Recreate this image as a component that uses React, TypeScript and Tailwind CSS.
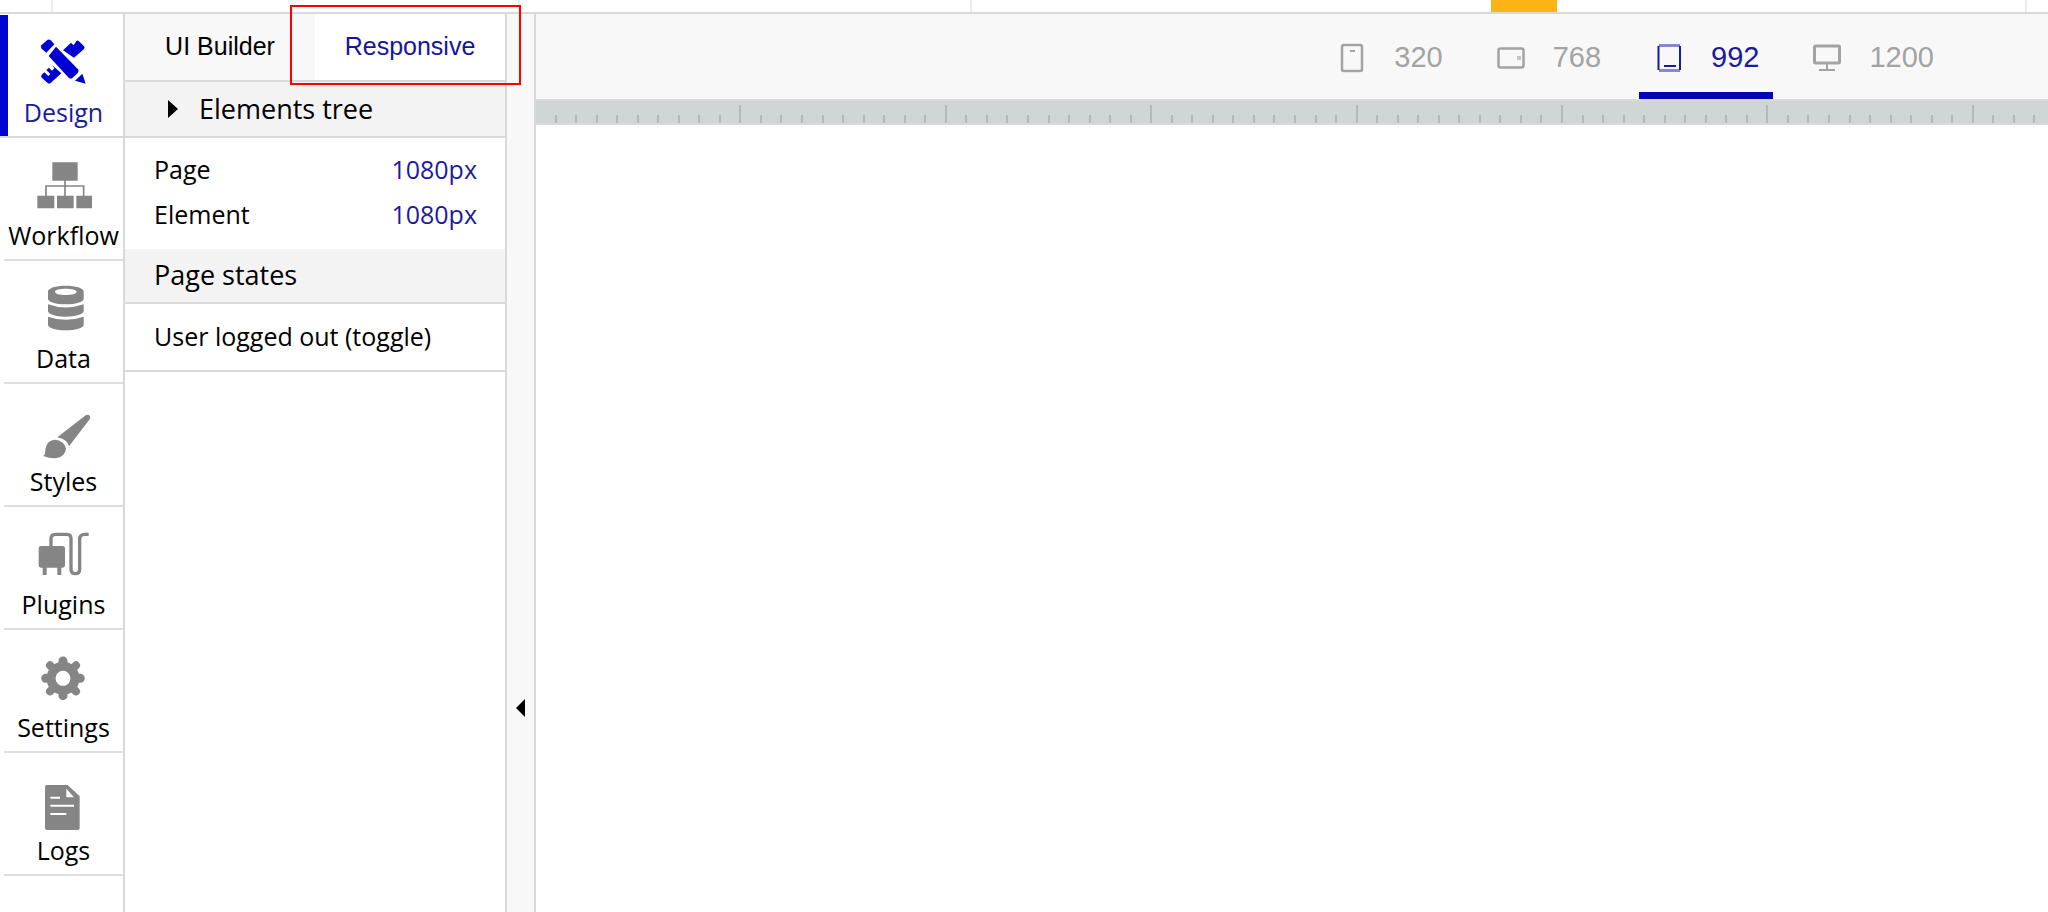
import type { ReactNode } from "react";

type NavItem = {
  label: string;
  icon: ReactNode;
  active?: boolean;
};

const DesignIcon = () => (
  <svg viewBox="108 108 168 168" className="size-14" fill="currentColor" aria-hidden="true">
    <path d="M124 136 L143 119 Q148 117 152 121 L163 133 L139 158 L125 146 Q121 141 124 136Z" />
    <path d="M168 140 L234 208 Q238 214 233 219 L218 233 Q212 238 206 233 L146 168Z" />
    <path d="M225 242 L247 221 L257 251Z" />
    <path d="M229 123 Q233 120 237 124 L252 139 Q256 143 252 147 L222 173 L189 151 L213 128 L221 136Z" />
    <path d="M157 196 L184 220 L152 249 Q147 253 142 248 L126 234 Q121 229 125 224 L133 217 L145 228 L151 222 L139 210 L147 203 L156 212 L163 205Z" />
  </svg>
);

const WorkflowIcon = () => (
  <svg viewBox="108 477 168 168" className="size-14" fill="currentColor" aria-hidden="true">
    <path d="M157 487h76v55h-76z M112 587h51v38h-51z M171 587h50v38h-50z M229 587h49v38h-49z" />
    <path d="M195 540v48 M138 588v-30h113v30" fill="none" stroke="currentColor" strokeWidth="5" />
  </svg>
);

const DataIcon = () => (
  <svg viewBox="108 96 168 168" className="size-14" fill="currentColor" aria-hidden="true">
    <path fillRule="evenodd" d="M144 124c0-10 24-17 53-17s54 7 54 17v23c0 9-25 16-54 16s-53-7-53-16z M165 125c0 6 14 10 32 10s33-4 33-10-15-9-33-9-32 3-32 9z" />
    <path d="M144 163q53 19 107 0v21c0 9-25 16-54 16s-53-7-53-16z" />
    <path d="M144 200q53 19 107 0v24c0 10-25 17-54 17s-53-7-53-17z" />
  </svg>
);

const StylesIcon = () => (
  <svg viewBox="108 465 168 168" className="size-14" fill="currentColor" aria-hidden="true">
    <path d="M257 496 Q264 492 269 497 Q272 502 269 508 L207 589 Q202 568 172 562Z" />
    <path d="M130 618 Q137 612 136 598 Q140 570 166 569 Q194 573 198 596 Q195 620 168 625 Q147 626 130 618Z" />
  </svg>
);

const PluginsIcon = () => (
  <svg viewBox="108 84 168 168" className="size-14" fill="currentColor" aria-hidden="true">
    <path d="M123 138h65q7 0 7 7v51q0 7-7 7h-4v22h-12v-22h-32v22h-12v-22h-5q-7 0-7-7v-51q0-7 7-7z" />
    <path
      d="M153 140v-24q0-13 13-13h35q12 0 12 13v90q0 15 13 15t13-15v-88q0-15 15-15h12"
      fill="none"
      stroke="currentColor"
      strokeWidth="10"
    />
  </svg>
);

const SettingsIcon = () => (
  <svg viewBox="108 453 168 168" className="size-14" aria-hidden="true">
    <circle cx="189" cy="535" r="36" fill="none" stroke="currentColor" strokeWidth="27" />
    <g stroke="currentColor" strokeWidth="27" strokeLinecap="round">
      <path d="M189 492v-9 M189 578v9 M146 535h-9 M232 535h9" />
      <path d="M159 505l-9-9 M219 505l9-9 M159 565l-9 9 M219 565l9 9" strokeWidth="24" />
    </g>
  </svg>
);

const LogsIcon = () => (
  <svg viewBox="108 822 168 168" className="size-14 overflow-visible" fill="currentColor" aria-hidden="true">
    <path d="M141 855h62l36 34v95q0 6-6 6h-92q-6 0-6-6V861q0-6 6-6z" />
    <path d="M199 866l23 26h-23z" fill="#fff" />
    <path d="M151 893h29 M151 917h71 M151 942h48" stroke="#fff" strokeWidth="6" />
  </svg>
);

const navItems: NavItem[] = [
  { label: "Design", icon: <DesignIcon />, active: true },
  { label: "Workflow", icon: <WorkflowIcon /> },
  { label: "Data", icon: <DataIcon /> },
  { label: "Styles", icon: <StylesIcon /> },
  { label: "Plugins", icon: <PluginsIcon /> },
  { label: "Settings", icon: <SettingsIcon /> },
  { label: "Logs", icon: <LogsIcon /> },
];

const devices = [
  {
    width: 320,
    icon: (
      <svg viewBox="0 0 28 32" className="h-8 w-7" fill="none" stroke="currentColor" strokeWidth="2.5" aria-hidden="true">
        <rect x="4" y="3" width="20" height="26" rx="2" />
        <path d="M12 9h5" strokeWidth="2" />
      </svg>
    ),
  },
  {
    width: 768,
    icon: (
      <svg viewBox="0 0 28 32" className="h-8 w-7" fill="none" stroke="currentColor" strokeWidth="2.5" aria-hidden="true">
        <rect x="1.5" y="6.5" width="25" height="19" rx="2" />
        <path d="M20 16h4" strokeWidth="4" opacity="0.6" />
      </svg>
    ),
  },
  {
    width: 992,
    active: true,
    icon: (
      <svg viewBox="0 0 28 32" className="h-8 w-7" fill="none" stroke="currentColor" strokeWidth="2" aria-hidden="true">
        <path d="M4 3.5h21M4 28.5h21" strokeWidth="3" opacity="0.5" />
        <path d="M3.5 4v24M25 4v24" />
        <path d="M9 24h12" />
      </svg>
    ),
  },
  {
    width: 1200,
    icon: (
      <svg viewBox="0 0 28 32" className="h-8 w-7" fill="none" stroke="currentColor" strokeWidth="3" aria-hidden="true">
        <rect x="1.5" y="4" width="25" height="17" rx="1" />
        <path d="M14 22v6M6 28h16" strokeWidth="2" />
      </svg>
    ),
  },
];

// one major mark for every ten
const ticks = Array.from({ length: 180 }, (_, i) => i + 1);

function TopStrip() {
  return (
    <div className="flex h-[14px] shrink-0 border-b-2 border-[#d9d9d9] bg-white">
      <div className="w-[53px] border-r-2 border-[#ebebf0]" />
      <div className="w-[467px] border-r-2 border-[#ebebf0]" />
      <div className="w-[452px] border-r-2 border-[#ebebf0]" />
      <div className="flex flex-1 justify-end border-r-2 border-[#ebebf0] pr-[468px]">
        <div className="w-[66px] bg-[#fbb316]" />
      </div>
      <div className="w-[21px]" />
    </div>
  );
}

function Sidebar() {
  return (
    <nav className="w-[125px] shrink-0 border-r-2 border-[#d9d9d9] bg-white pt-px text-[25px]">
      {navItems.map((item) => (
        <a
          key={item.label}
          href="#"
          className={
            item.active
              ? "flex h-[123px] border-b-2 border-[#d9d9d9] text-[#0000d2]"
              : "flex h-[123px] text-[#858585]"
          }
        >
          <span className={item.active ? "w-2 bg-[#0000d2]" : "w-1"} />
          <span
            className={
              item.active
                ? "flex flex-1 flex-col items-center pt-[21px] pr-1"
                : "flex flex-1 flex-col items-center border-b-2 border-[#dedede] pt-[21px]"
            }
          >
            {item.icon}
            <span className={item.active ? "mt-1 leading-8 text-[#1a1a9c]" : "mt-1 leading-8 text-black"}>
              {item.label}
            </span>
          </span>
        </a>
      ))}
    </nav>
  );
}

function Panel() {
  return (
    <aside className="w-[382px] shrink-0 border-r-2 border-[#d9d9d9] bg-white text-[25px] text-black">
      <div className="flex h-[68px] border-b-2 border-[#d9d9d9] bg-[#f8f8f8] font-['Liberation_Sans',sans-serif]">
        <button className="w-[190px]">UI Builder</button>
        <button className="relative flex-1 bg-white text-[#15159a]">
          Responsive
          <span className="absolute -top-[9px] -right-4 -bottom-[5px] -left-[25px] z-10 border-2 border-[#ff0000]" />
        </button>
      </div>

      <button className="flex h-14 w-full items-center border-b-2 border-[#d9d9d9] bg-[#f3f3f3] pl-[42px] text-[27px]">
        <svg viewBox="0 0 12 18" className="h-[18px] w-3" aria-hidden="true">
          <path d="M1 0l10 9-10 9z" />
        </svg>
        <span className="ml-5">Elements tree</span>
      </button>

      <dl className="pt-[9px] pr-7 pb-3 pl-[29px]">
        <div className="flex h-[45px] items-center justify-between">
          <dt>Page</dt>
          <dd className="text-[#1a1a9c]">1080px</dd>
        </div>
        <div className="flex h-[45px] items-center justify-between">
          <dt>Element</dt>
          <dd className="text-[#1a1a9c]">1080px</dd>
        </div>
      </dl>

      <h2 className="flex h-[55px] items-center border-b-2 border-[#d9d9d9] bg-[#f3f3f3] pl-[29px] text-[27px]">
        Page states
      </h2>
      <button className="flex h-[68px] w-full items-center border-b-2 border-[#d9d9d9] pl-[29px]">
        User logged out (toggle)
      </button>
    </aside>
  );
}

function DeviceBar() {
  return (
    <div className="flex h-[85px] justify-end gap-6 bg-[#f8f8f8] pr-[100px] font-['Liberation_Sans',sans-serif] text-[29px]">
      {devices.map((device) => (
        <button
          key={device.width}
          className={
            device.active
              ? "flex items-center gap-7 pt-0.5 pr-[14px] pl-4 text-[#1a1a9c] shadow-[inset_0_-7px_0_#0505b4]"
              : "flex items-center gap-7 pt-0.5 pr-[14px] pl-4 text-[#a3a3a3]"
          }
        >
          {device.icon}
          {device.width}
        </button>
      ))}
    </div>
  );
}

function Ruler() {
  return (
    <div className="h-[26px] overflow-hidden border-y-2 border-[#d9dbdb] bg-[#d0d5d5]">
      <svg className="h-[22px] w-full" stroke="#b3b8b8" strokeWidth="2" aria-hidden="true">
        {ticks.map((i) => {
          const x = Math.round(i * 20.54) - 1;
          return <line key={i} x1={x} x2={x} y1={i % 10 === 0 ? 4 : 14} y2={22} />;
        })}
      </svg>
    </div>
  );
}

export default function App() {
  return (
    <div className="flex min-h-screen flex-col bg-white font-['Open_Sans',sans-serif]">
      <TopStrip />
      <div className="flex flex-1">
        <Sidebar />
        <Panel />
        <button
          aria-label="Collapse panel"
          className="flex w-[29px] shrink-0 items-start justify-center border-r-2 border-[#d9d9d9] bg-[#f8f8f8] pt-[685px]"
        >
          <svg viewBox="0 0 10 18" className="h-[18px] w-[10px]" aria-hidden="true">
            <path d="M9 0v18L0 9z" />
          </svg>
        </button>
        <main className="min-w-0 flex-1">
          <DeviceBar />
          <Ruler />
        </main>
      </div>
    </div>
  );
}
